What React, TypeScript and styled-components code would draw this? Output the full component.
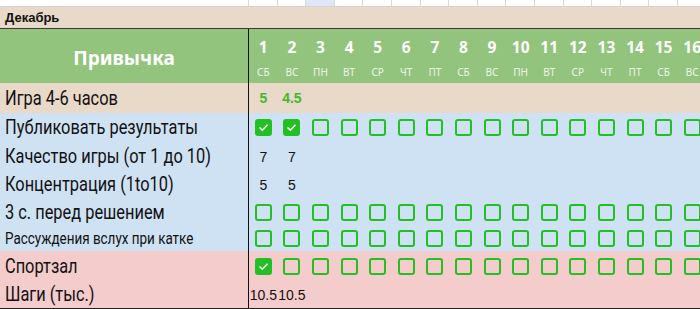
import React from 'react';
import styled, { createGlobalStyle } from 'styled-components';

const GlobalStyle = createGlobalStyle`
    html, body {
        margin: 0;
        padding: 0;
        background: #ffffff;
        overflow: hidden;
    }
`;

const DAY_W = 28.6;
const LABEL_W = 249;
const DAYS = ['СБ', 'ВС', 'ПН', 'ВТ', 'СР', 'ЧТ', 'ПТ'];
const TOTAL_DAYS = 17;

const days = Array.from({ length: TOTAL_DAYS }, (_, i) => ({
    num: i + 1,
    name: DAYS[i % 7],
}));

const Sheet = styled.div`
    width: 700px;
    height: 309px;
    overflow: hidden;
    font-family: 'Liberation Sans', Arial, sans-serif;
`;

const Grid = styled.div`
    display: grid;
    grid-template-columns: ${LABEL_W}px repeat(${TOTAL_DAYS}, ${DAY_W}px);
`;

const TopStrip = styled(Grid)`
    height: 6px;
    border-bottom: 1px solid #d4d4d4;
`;

const StripCell = styled.div<{ $active?: boolean }>`
    border-right: 1px solid #d9d9d9;
    background: ${(p) => (p.$active ? '#dfe6f7' : '#ffffff')};
`;

const MonthBar = styled.div`
    height: 21px;
    background: #e8d9c8;
    border-bottom: 1px solid #3a3a3a;
    display: flex;
    align-items: center;
    padding-left: 5px;
    font-size: 13px;
    font-weight: bold;
    color: #111;
`;

const Header = styled(Grid)`
    height: 54px;
    background: #93c47d;
`;

const HeaderTitle = styled.div`
    border-right: 1.5px solid #111;
    display: flex;
    align-items: center;
    justify-content: center;
    padding-top: 4px;
    color: #ffffff;
    font-family: 'Noto Sans', 'DejaVu Sans', sans-serif;
    font-weight: bold;
    font-size: 19px;
`;

const DayCell = styled.div`
    display: flex;
    flex-direction: column;
    align-items: center;
    color: #ffffff;
    font-family: 'Noto Sans', 'DejaVu Sans', sans-serif;
    white-space: nowrap;
`;

const DayNum = styled.span`
    margin-top: 8px;
    font-size: 15.5px;
    font-weight: bold;
    line-height: 20px;
`;

const DayName = styled.span`
    margin-top: 9px;
    font-size: 10px;
    line-height: 12px;
    color: #eef6ea;
`;

const Row = styled(Grid)<{ $bg: string; $h: number }>`
    height: ${(p) => p.$h}px;
    background: ${(p) => p.$bg};
`;

const Label = styled.div`
    border-right: 1.5px solid #111;
    display: flex;
    align-items: center;
    padding-left: 5px;
    white-space: nowrap;
    overflow: hidden;
`;

const LabelText = styled.span<{ $small?: boolean }>`
    display: inline-block;
    font-family: Roboto, 'Liberation Sans', sans-serif;
    font-size: ${(p) => (p.$small ? '16px' : '19.5px')};
    color: #111;
    transform: scaleX(0.84);
    transform-origin: left center;
`;

const Cell = styled.div<{ $green?: boolean }>`
    display: flex;
    align-items: center;
    justify-content: center;
    font-size: 14px;
    color: ${(p) => (p.$green ? '#44b82a' : '#111')};
    font-weight: ${(p) => (p.$green ? 'bold' : 'normal')};
    white-space: nowrap;
`;

const Box = styled.div<{ $checked?: boolean }>`
    width: 17px;
    height: 17px;
    box-sizing: border-box;
    border: 2px solid #23c023;
    border-radius: 3px;
    background: ${(p) => (p.$checked ? '#23c023' : 'transparent')};
    display: flex;
    align-items: center;
    justify-content: center;
`;

const BottomLine = styled.div`
    height: 2px;
    border-top: 1px solid #222;
    background: #f0e6dc;
`;

const Check = ({ checked }: { checked?: boolean }) => (
    <Box $checked={checked}>
        {checked && (
            <svg width="11" height="9" viewBox="0 0 11 9">
                <path d="M1.5 4.5 L4.3 7.2 L9.5 1.8" fill="none" stroke="#fff" strokeWidth="1.6" />
            </svg>
        )}
    </Box>
);

type RowData = {
    label: string;
    bg: string;
    h: number;
    small?: boolean;
    values?: string[];
    green?: boolean;
    checks?: number[];
};

const BEIGE = '#e8d9c8';
const BLUE = '#cfe2f3';
const PINK = '#f4cccc';

const rows: RowData[] = [
    { label: 'Игра 4-6 часов', bg: BEIGE, h: 30, values: ['5', '4.5'], green: true },
    { label: 'Публиковать результаты', bg: BLUE, h: 29, checks: [1, 2] },
    { label: 'Качество игры (от 1 до 10)', bg: BLUE, h: 29, values: ['7', '7'] },
    { label: 'Концентрация (1to10)', bg: BLUE, h: 27, values: ['5', '5'] },
    { label: '3 с. перед решением', bg: BLUE, h: 28, checks: [] },
    { label: 'Рассуждения вслух при катке', bg: BLUE, h: 25, small: true, checks: [] },
    { label: 'Спортзал', bg: PINK, h: 30, checks: [1] },
    { label: 'Шаги (тыс.)', bg: PINK, h: 27, values: ['10.5', '10.5'] },
];

const HabitRow = ({ row }: { row: RowData }) => (
    <Row $bg={row.bg} $h={row.h}>
        <Label>
            <LabelText $small={row.small}>{row.label}</LabelText>
        </Label>
        {days.map((d, i) => (
            <Cell key={d.num} $green={row.green}>
                {row.checks ? <Check checked={row.checks.includes(d.num)} /> : row.values?.[i]}
            </Cell>
        ))}
    </Row>
);

export default function App() {
    return (
        <Sheet>
            <GlobalStyle />
            <TopStrip>
                <StripCell />
                {days.map((d) => (
                    <StripCell key={d.num} $active={d.num === 3} />
                ))}
            </TopStrip>
            <MonthBar>Декабрь</MonthBar>
            <Header>
                <HeaderTitle>Привычка</HeaderTitle>
                {days.map((d) => (
                    <DayCell key={d.num}>
                        <DayNum>{d.num}</DayNum>
                        <DayName>{d.name}</DayName>
                    </DayCell>
                ))}
            </Header>
            {rows.map((r) => (
                <HabitRow key={r.label} row={r} />
            ))}
            <BottomLine />
        </Sheet>
    );
}
